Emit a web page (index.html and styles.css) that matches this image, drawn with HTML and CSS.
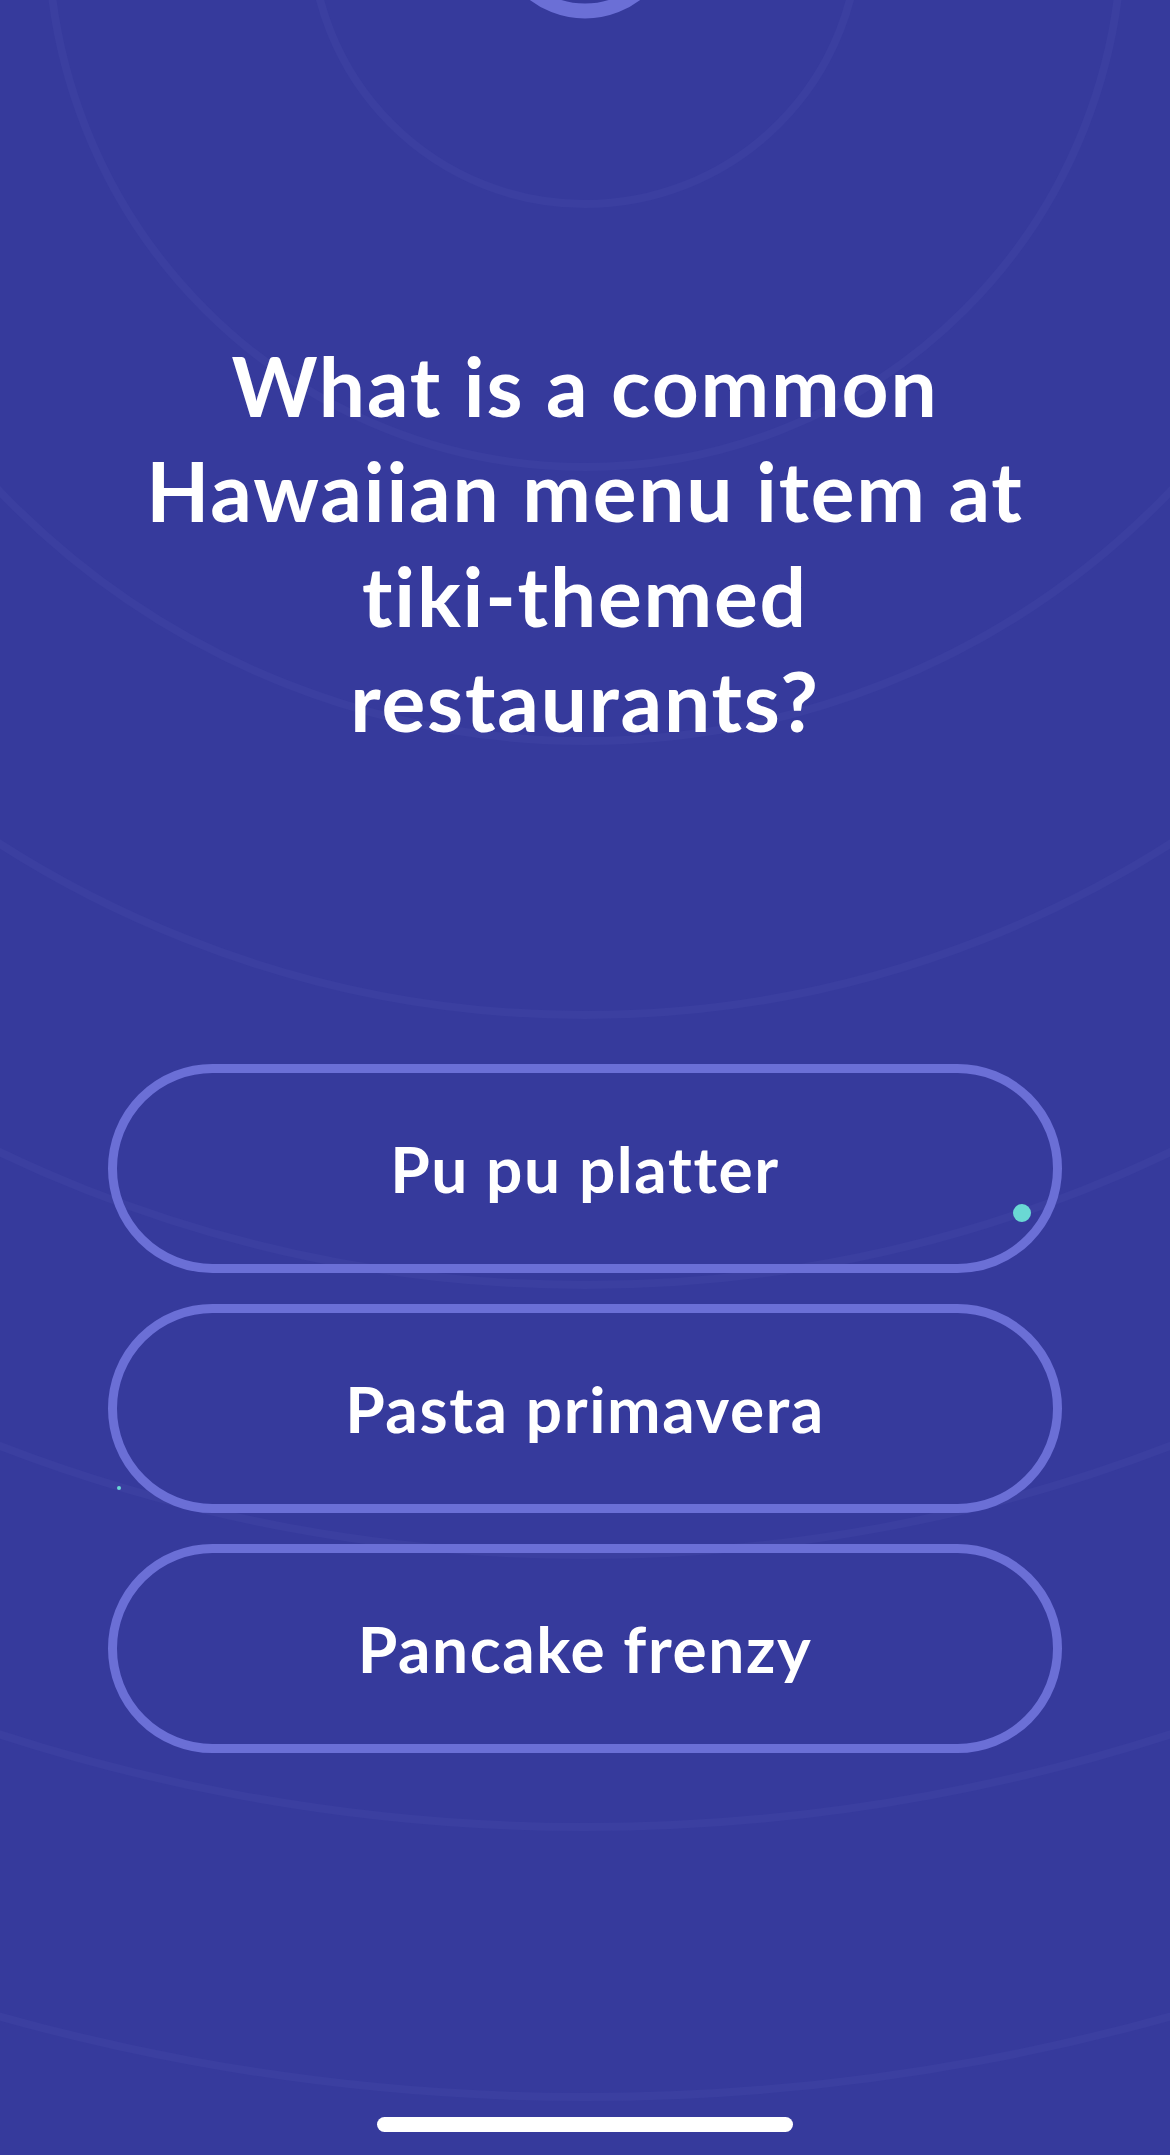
FILE: index.html
```html
<!DOCTYPE html>
<html lang="en">
<head>
<meta charset="utf-8">
<title>Quiz</title>
<link rel="stylesheet" href="styles.css">
</head>
<body>
<div class="screen">
  <svg class="rings" width="1170" height="2155" viewBox="0 0 1170 2155" aria-hidden="true">
    <g fill="none" stroke="#3b3fa0" stroke-width="8">
      <circle cx="585" cy="-70" r="274"/>
      <circle cx="585" cy="-70" r="537"/>
      <circle cx="585" cy="-70" r="811"/>
      <circle cx="585" cy="-70" r="1085"/>
      <circle cx="585" cy="-70" r="1355"/>
      <circle cx="585" cy="-70" r="1625"/>
      <circle cx="585" cy="-70" r="1897"/>
      <circle cx="585" cy="-70" r="2167"/>
    </g>
    <circle cx="585" cy="-73" r="84" fill="none" stroke="#6b6fd6" stroke-width="15"/>
  </svg>

  <main class="content">
    <h1 class="question">What is a common<br>Hawaiian menu item at<br>tiki-themed<br>restaurants?</h1>
    <div class="answers">
      <button class="answer">Pu pu platter</button>
      <button class="answer">Pasta primavera</button>
      <button class="answer">Pancake frenzy</button>
    </div>
    <div class="home-indicator"></div>
  </main>

  <span class="spark spark-big"></span>
  <span class="spark spark-small"></span>
</div>
</body>
</html>
```

FILE: styles.css
```css
html, body {
  margin: 0;
  padding: 0;
}

body {
  background: #363a9c;
  font-family: "Lato", "Noto Sans", sans-serif;
  color: #ffffff;
  font-variant-ligatures: none;
}

.screen {
  position: relative;
  width: 1170px;
  height: 2155px;
  overflow: hidden;
  background: #363a9c;
}

.rings {
  position: absolute;
  left: 0;
  top: 0;
  display: block;
}

.content {
  position: relative;
  display: flex;
  flex-direction: column;
  align-items: center;
  height: 2155px;
  box-sizing: border-box;
  padding-top: 333px;
}

.question {
  margin: 0;
  width: 1000px;
  font-size: 82px;
  line-height: 105px;
  font-weight: 700;
  text-align: center;
  letter-spacing: 1.8px;
  font-variant-ligatures: none;
}

.answers {
  margin-top: 311px;
  width: 954px;
  display: flex;
  flex-direction: column;
  gap: 31px;
}

.answer {
  height: 209px;
  box-sizing: border-box;
  border: 9px solid #6b6fd6;
  border-radius: 105px;
  background: transparent;
  color: #ffffff;
  font-family: "Lato", "Noto Sans", sans-serif;
  font-size: 64px;
  font-weight: 700;
  letter-spacing: 1.6px;
  font-variant-ligatures: none;
  display: flex;
  align-items: center;
  justify-content: center;
  padding: 0;
}

.home-indicator {
  margin-top: auto;
  margin-bottom: 23px;
  width: 416px;
  height: 15px;
  border-radius: 8px;
  background: #ffffff;
}

.spark {
  position: absolute;
  border-radius: 50%;
  background: #6ad8d4;
}

.spark-big {
  left: 1013px;
  top: 1204px;
  width: 18px;
  height: 18px;
}

.spark-small {
  left: 117px;
  top: 1486px;
  width: 4px;
  height: 4px;
}
```
